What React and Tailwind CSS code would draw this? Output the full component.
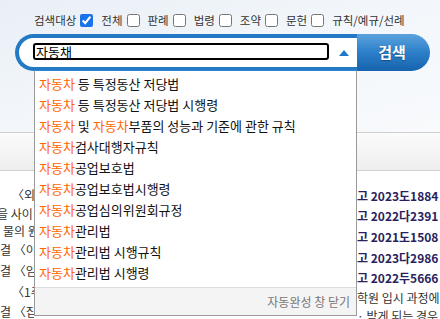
import React from "react";

const items = [
  [["자동차", true], [" 등 특정동산 저당법", false]],
  [["자동차", true], [" 등 특정동산 저당법 시행령", false]],
  [["자동차", true], [" 및 ", false], ["자동차", true], ["부품의 성능과 기준에 관한 규칙", false]],
  [["자동차", true], ["검사대행자규칙", false]],
  [["자동차", true], ["공업보호법", false]],
  [["자동차", true], ["공업보호법시행령", false]],
  [["자동차", true], ["공업심의위원회규정", false]],
  [["자동차", true], ["관리법", false]],
  [["자동차", true], ["관리법 시행규칙", false]],
  [["자동차", true], ["관리법 시행령", false]],
];

const targets = ["전체", "판례", "법령", "조약", "문헌", "규칙/예규/선례"];

const leftRows = [
  { h: "h-[20px]", pl: "pl-[12px]", t: "〈외국" },
  { h: "h-[18px]", pl: "pl-0 -ml-[3px]", t: "을 사이" },
  { h: "h-[16px]", pl: "pl-[3px]", t: "물의 원" },
  { h: "h-[22px]", pl: "pl-0", t: "결 〈이" },
  { h: "h-[20px]", pl: "pl-0", t: "결 〈임" },
  { h: "h-[21px]", pl: "pl-[12px]", t: "〈1주" },
  { h: "h-[20px]", pl: "pl-0", t: "결 〈집" },
];

const rightRows = [
  { h: "h-[20px]", b: true, t: "고 2023도1884" },
  { h: "h-[20px]", b: true, t: "고 2022다2391" },
  { h: "h-[21px]", b: true, t: "고 2021도1508" },
  { h: "h-[21px]", b: true, t: "고 2023다2986" },
  { h: "h-[20px]", b: true, t: "고 2022두5666" },
  { h: "h-[19px]", b: false, t: "학원 입시 과정에" },
  { h: "h-[18px]", b: false, t: "· 받게 되는 경우," },
];

export default function App() {
  return (
    <div className="relative w-[440px] h-[319px] overflow-hidden bg-white font-['Noto_Sans_CJK_KR',sans-serif] text-[#222]">
      {/* top search region */}
      <div className="h-[133px] pt-[12px] border-b border-[#cfcfcf] bg-gradient-to-br from-[#e9eff6] via-[#f3f7fb] to-[#f8fafc]">
        <div className="flex items-center h-[16px] pl-[34px] text-[11.5px] leading-[16px] text-[#333]">
          <span>검색대상</span>
          <input type="checkbox" defaultChecked className="m-0 ml-[4px] mr-[8px] w-[13px] h-[13px] accent-[#1a73e8]" />
          {targets.map((t, i) => (
            <React.Fragment key={t}>
              <span>{t}</span>
              {i < targets.length - 1 && (
                <input type="checkbox" className="m-0 ml-[4px] mr-[8px] w-[13px] h-[13px]" />
              )}
            </React.Fragment>
          ))}
        </div>
        <div className="flex ml-[15px] mt-[6px] w-[415px] h-[37px]">
          <div className="flex flex-1 bg-white border-[4px] border-r-0 border-[#2479c4] rounded-l-[20px] pl-[14px]">
            <div className="mt-[5px] w-[296px] h-[17px] border-2 border-black rounded-[3px] pl-[1px] text-[13px] leading-[13px] text-black whitespace-nowrap overflow-hidden">
              자동<span className="underline">채</span>
            </div>
            <div className="flex-1 flex items-center justify-center pl-[2px]">
              <div className="w-0 h-0 border-l-[5px] border-r-[5px] border-b-[6px] border-l-transparent border-r-transparent border-b-[#1f78c8]" />
            </div>
          </div>
          <div className="w-[73px] h-full rounded-r-[20px] bg-gradient-to-b from-[#5aa2dd] via-[#2b7fc9] to-[#1763ad] flex items-center justify-center pr-[3px] text-white font-bold text-[15px] [text-shadow:0_1px_1px_rgba(0,0,0,0.35)]">
            검색
          </div>
        </div>
      </div>
      {/* band */}
      <div className="h-[38px] border-b border-[#cfcfcf] bg-gradient-to-b from-[#fbfbfb] to-[#eeeeee]" />
      {/* background results */}
      <div className="flex text-[12px] whitespace-nowrap">
        <div className="w-[34px] overflow-hidden pt-[14px] flex flex-col">
          {leftRows.map((r, i) => (
            <div key={i} className={`${r.h} ${r.pl} flex items-center text-[#333]`}>{r.t}</div>
          ))}
        </div>
        <div className="ml-[323px] flex-1 overflow-hidden pt-[15px] flex flex-col">
          {rightRows.map((r, i) => (
            <div key={i} className={`${r.h} flex items-center ${r.b ? "font-bold text-[#2a1f5e]" : "text-[#333]"}`}>{r.t}</div>
          ))}
        </div>
      </div>
      {/* autocomplete dropdown */}
      <div className="absolute left-[34px] top-[70px] w-[323px] h-[246px] bg-white border border-[#9a9a9a] border-t-[#2b86d3] flex flex-col">
        <div className="pt-[2px] pl-[4px] text-[13px] text-[#111]">
          {items.map((parts, i) => (
            <div key={i} className="h-[21px] leading-[21px] whitespace-nowrap">
              {parts.map(([t, o], j) => (
                <span key={j} className={o ? "text-[#ff6600]" : ""}>{t}</span>
              ))}
            </div>
          ))}
        </div>
        <div className="mt-auto h-[28px] border-t border-[#dddddd] bg-[#f4f4f4] flex items-center justify-end pr-[6px] text-[12px] text-[#777]">
          자동완성 창 닫기
        </div>
      </div>
    </div>
  );
}
